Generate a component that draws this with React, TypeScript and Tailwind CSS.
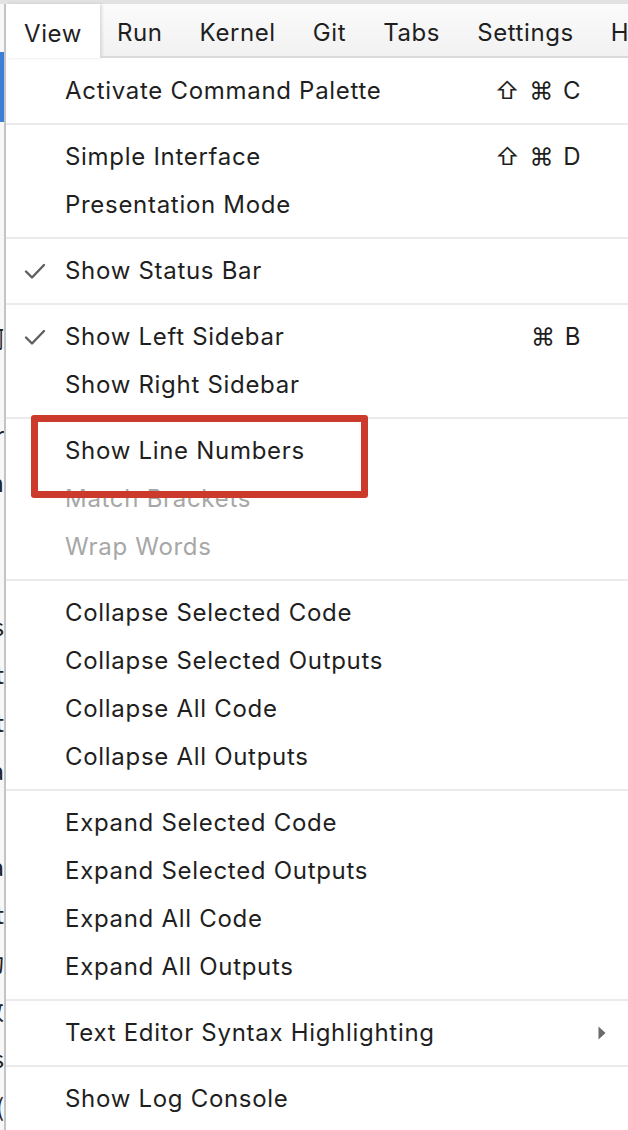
import React from 'react';

type Item = {
  label: string;
  checked?: boolean;
  shortcut?: string;
  disabled?: boolean;
  submenu?: boolean;
};

const sections: Item[][] = [
  [{ label: 'Activate Command Palette', shortcut: '⇧ ⌘ C' }],
  [
    { label: 'Simple Interface', shortcut: '⇧ ⌘ D' },
    { label: 'Presentation Mode' },
  ],
  [{ label: 'Show Status Bar', checked: true }],
  [
    { label: 'Show Left Sidebar', checked: true, shortcut: '⌘ B' },
    { label: 'Show Right Sidebar' },
  ],
  [
    { label: 'Show Line Numbers' },
    { label: 'Match Brackets', disabled: true },
    { label: 'Wrap Words', disabled: true },
  ],
  [
    { label: 'Collapse Selected Code' },
    { label: 'Collapse Selected Outputs' },
    { label: 'Collapse All Code' },
    { label: 'Collapse All Outputs' },
  ],
  [
    { label: 'Expand Selected Code' },
    { label: 'Expand Selected Outputs' },
    { label: 'Expand All Code' },
    { label: 'Expand All Outputs' },
  ],
  [{ label: 'Text Editor Syntax Highlighting', submenu: true }],
  [{ label: 'Show Log Console' }],
];

const menuBar = ['Run', 'Kernel', 'Git', 'Tabs', 'Settings', 'Help'];

// bits of the notebook that peek out behind the menu
const leftBits = ['啊', '：', 'r', 'n', '·', '', 's', 't', 't', 'a', '', 'a', 't', '功', '数', 's', '('];

function Check() {
  return (
    <svg width="22" height="18" viewBox="0 0 22 18" fill="none">
      <path d="M2 9.5 L8 15.5 L20 3" stroke="#5f5f5f" strokeWidth="2.4" strokeLinecap="round" strokeLinejoin="round" />
    </svg>
  );
}

function MenuRow({ item }: { item: Item }) {
  return (
    <div className="flex h-[48px] items-center">
      <div className="flex w-[58px] shrink-0 justify-center">{item.checked && <Check />}</div>
      <span
        className={
          'min-w-0 flex-1 whitespace-nowrap pl-[1px] text-[24px] tracking-[0.7px] ' +
          (item.disabled ? 'text-[#a7a7a7]' : 'text-[#1f1f1f]')
        }
      >
        {item.label}
      </span>
      {item.shortcut && (
        <span className="whitespace-nowrap text-[24px] tracking-[1.5px] text-[#1f1f1f] [font-family:Inter,'DejaVu_Sans',sans-serif]">
          {item.shortcut}
        </span>
      )}
      <div className="flex w-[46px] shrink-0 pl-[16px]">
        {item.submenu && (
          <svg width="8" height="14" viewBox="0 0 8 14">
            <path d="M0.5 0.5 L7.5 7 L0.5 13.5 Z" fill="#6a6a6a" />
          </svg>
        )}
      </div>
    </div>
  );
}

export default function App() {
  return (
    <div className="relative h-[1130px] w-[628px] overflow-hidden bg-white [font-family:Inter,'Noto_Sans',sans-serif]">
      <div className="h-[4px] bg-[#e2e2e2]" />
      <div className="flex h-[1126px]">
        {/* background notebook strip */}
        <div className="flex w-[6px] shrink-0">
          <div className="flex w-[4px] flex-col overflow-hidden bg-[#f7f7f7]">
            <div className="h-[48px]" />
            <div className="h-[71px] bg-[#3d7fd6]" />
            <div className="h-[193px]" />
            {leftBits.map((b, i) => (
              <div
                key={i}
                className="flex h-[48px] shrink-0 items-center justify-end whitespace-nowrap text-[24px] text-[#222] [font-family:'Noto_Sans_CJK_SC',sans-serif]"
              >
                {b}
              </div>
            ))}
          </div>
          <div className="w-[2px] bg-[#c4c4c4]" />
        </div>

        <div className="flex min-w-0 flex-1 flex-col">
          {/* menu bar */}
          <div className="flex h-[54px] items-stretch bg-gradient-to-b from-[#fbfbfb] to-[#f1f1f1] text-[24px] tracking-[0.6px] text-[#1f1f1f]">
            <div className="flex items-center bg-white pl-[18px] pr-[18px] pt-[5px] shadow-[2px_0_3px_rgba(0,0,0,0.12)]">View</div>
            <div className="flex min-w-0 flex-1 items-center gap-[37px] overflow-hidden whitespace-nowrap border-b-2 border-[#dadada] pl-[17px] pt-[5px]">
              {menuBar.map((m) => (
                <span key={m}>{m}</span>
              ))}
            </div>
          </div>

          {/* dropdown */}
          <div className="flex flex-col pt-[9px]">
            {sections.map((sec, si) => (
              <div key={si} className="flex flex-col">
                {si > 0 && <div className="my-[8px] h-[2px] bg-[#ebebeb]" />}
                {sec.map((it) => (
                  <MenuRow key={it.label} item={it} />
                ))}
              </div>
            ))}
          </div>
        </div>
      </div>

      {/* annotation box */}
      <div className="absolute left-[31px] top-[415px] h-[83px] w-[337px] rounded-[3px] border-[7px] border-[#cc3a2b]" />
    </div>
  );
}
